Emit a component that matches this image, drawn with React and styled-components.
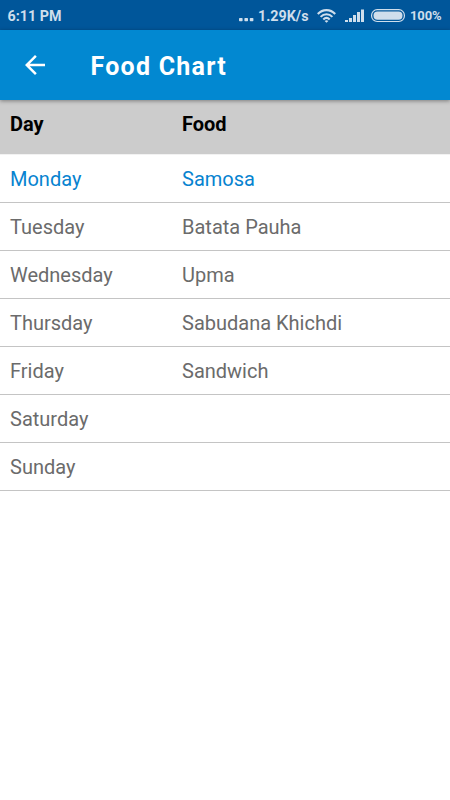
import React from "react";
import styled, { createGlobalStyle } from "styled-components";

const Global = createGlobalStyle`
  * { box-sizing: border-box; }
  body { margin: 0; background: #fff; font-family: Roboto, sans-serif; }
`;
const Screen = styled.main`
  width: 450px; height: 800px; background: #fff; overflow: hidden;
`;
const StatusBar = styled.div`
  height: 30px; padding: 1px 8px 0 7.5px; background: #00569a; color: #cfdeec;
  display: flex; align-items: center; justify-content: space-between;
  font-size: 14.3px; font-weight: 700; line-height: 30px;
`;
const StatusGroup = styled.div`
  display: flex; align-items: center; height: 30px;
  svg { display: block; flex: none; }
`;
const Speed = styled.span`
  width: 51px; margin: 0 8px 0 4px; white-space: nowrap;
`;
const Indicators = styled.div`
  display: flex; align-items: center; gap: 7.5px;
`;
const Percent = styled.span`
  width: 32px; font-size: 13px; font-weight: 700; margin-left: 5px; letter-spacing: -0.1px;
`;
const AppBar = styled.header`
  position: relative;
  height: 70px; background: #0288d1; color: #fff;
  display: flex; align-items: center; padding-left: 20px; gap: 40.5px;
  box-shadow: 0 1px 4px rgba(0, 0, 0, 0.4);
`;
const Title = styled.h1`
  margin: 3px 0 0; font-size: 25px; font-weight: 700; letter-spacing: 1.25px; line-height: 30px;
`;
const Row = styled.div`
  display: grid; grid-template-columns: 172px 1fr; padding-left: 10px;
  height: 48px; line-height: 48px; font-size: 20px;
  color: ${(p) => (p.$active ? "#0783d0" : "#6b6b6b")};
  border-bottom: 1px solid #c4c4c4;
`;
const HeadRow = styled(Row)`
  height: 54px; line-height: 49px; background: #ccc; color: #000; font-weight: 700; border: 0;
`;
const Days = styled.div`
  border-top: 1px solid #f2f2f2;
`;

const MENU = [
  ["Monday", "Samosa"],
  ["Tuesday", "Batata Pauha"],
  ["Wednesday", "Upma"],
  ["Thursday", "Sabudana Khichdi"],
  ["Friday", "Sandwich"],
  ["Saturday", ""],
  ["Sunday", ""],
];

const INK = "#cfdeec";

const Dots = () => (
  <svg width="15" height="16" viewBox="0 0 15 16" fill={INK}>
    <rect x="0" y="10" width="3.6" height="3.3" rx="0.7" />
    <rect x="5.4" y="10" width="3.6" height="3.3" rx="0.7" />
    <rect x="10.8" y="10" width="3.6" height="3.3" rx="0.7" />
  </svg>
);
const Wifi = () => (
  <svg width="20" height="16" viewBox="0 0 20 16" fill="none" stroke={INK} strokeWidth="2.1">
    <path d="M0.8 6C5.6 0.8 13.4 0.8 18.2 6M3.6 8.9C7 5.3 12 5.3 15.4 8.9M6.3 11.5C8.3 9.5 10.7 9.5 12.7 11.5" />
    <path d="M7.6 12.9Q9.5 11.6 11.4 12.9L9.5 14.8z" fill={INK} stroke="none" />
  </svg>
);
const Signal = () => (
  <svg width="19" height="14" viewBox="0 0 19 14" fill={INK}>
    <rect x="0" y="11" width="3" height="2" />
    <rect x="4" y="9" width="3" height="4" />
    <rect x="8" y="6" width="3" height="7" />
    <rect x="12" y="3" width="3" height="10" />
    <rect x="16" y="0.5" width="3" height="12.5" />
  </svg>
);
const Battery = () => (
  <svg width="34" height="14" viewBox="0 0 34 14">
    <rect x="0.6" y="0.7" width="32.8" height="11.8" rx="5.6" fill="none" stroke={INK} strokeWidth="1.2" />
    <rect x="2.5" y="2.5" width="29" height="8.2" rx="4" fill={INK} />
  </svg>
);

export default function App() {
  return (
    <Screen>
      <Global />
      <StatusBar>
        <span>6:11 PM</span>
        <StatusGroup>
          <Dots />
          <Speed>1.29K/s</Speed>
          <Indicators>
            <Wifi />
            <Signal />
            <Battery />
          </Indicators>
          <Percent>100%</Percent>
        </StatusGroup>
      </StatusBar>
      <AppBar>
        <svg width="30" height="30" viewBox="0 0 24 24" fill="#fff">
          <path d="M20 11H7.83l5.59-5.59L12 4l-8 8 8 8 1.41-1.41L7.83 13H20v-2z" />
        </svg>
        <Title>Food Chart</Title>
      </AppBar>
      <HeadRow><span>Day</span><span>Food</span></HeadRow>
      <Days>
        {MENU.map(([day, food], i) => (
          <Row key={day} $active={i === 0}><span>{day}</span><span>{food}</span></Row>
        ))}
      </Days>
    </Screen>
  );
}
